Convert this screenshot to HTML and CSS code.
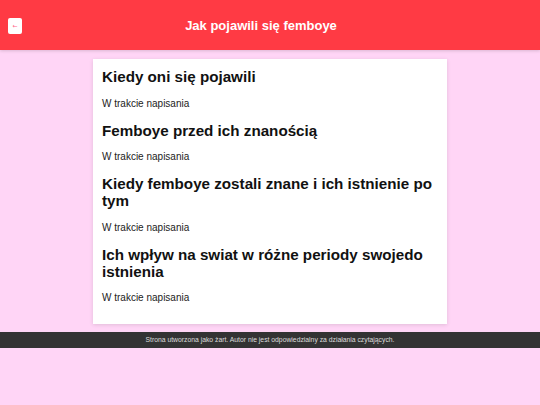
FILE: index.html
```html
<!DOCTYPE html>
<html lang="pl">
<head>
<meta charset="utf-8">
<title>Jak pojawili się femboye</title>
<link rel="stylesheet" href="styles.css">
</head>
<body>
<header class="topbar">
  <button class="back" aria-label="Wróć">←</button>
  <h1 class="title">Jak pojawili się femboye</h1>
</header>
<main class="main">
  <article class="card">
    <h2>Kiedy oni się pojawili</h2>
    <p>W trakcie napisania</p>
    <h2>Femboye przed ich znanością</h2>
    <p>W trakcie napisania</p>
    <h2>Kiedy femboye zostali znane i ich istnienie po tym</h2>
    <p>W trakcie napisania</p>
    <h2>Ich wpływ na swiat w różne periody swojedo istnienia</h2>
    <p>W trakcie napisania</p>
  </article>
</main>
<footer class="footer">Strona utworzona jako żart. Autor nie jest odpowiedzialny za działania czytających.</footer>
</body>
</html>
```
FILE: styles.css
```css
html, body {
  margin: 0;
  padding: 0;
}
body {
  background: #ffd5f6;
  font-family: "Liberation Sans", Arial, sans-serif;
  color: #111;
}
.topbar {
  height: 50px;
  background: #ff3a44;
  display: flex;
  align-items: center;
  padding: 0 8px;
  box-shadow: 0 1px 3px rgba(0,0,0,0.15);
  position: relative;
}
.back {
  width: 14px;
  height: 16px;
  padding: 0;
  border: none;
  border-radius: 2px;
  background: #fff;
  color: #ff6a8a;
  font-size: 6px;
  line-height: 16px;
  font-family: "DejaVu Sans", sans-serif;
  margin-top: 1px;
}
.title {
  flex: 1;
  margin: 0 32px 0 0;
  text-align: center;
  color: #fff;
  font-size: 13px;
  font-weight: bold;
}
.main {
  padding: 9px 0 8px;
}
.card {
  width: 336px;
  margin: 0 auto;
  background: #fff;
  padding: 9px 9px 9px;
  box-shadow: 0 1px 4px rgba(0,0,0,0.12);
}
.card h2 {
  font-size: 15.2px;
  line-height: 17px;
  font-weight: bold;
  margin: 13px 0 12.5px;
  color: #111;
}
.card h2:first-child {
  margin-top: 0;
}
.card p {
  font-size: 10px;
  margin: 10px 0;
  color: #222;
}
.card p:last-child {
  margin-bottom: 12px;
}
.footer {
  background: #333;
  color: #ddd;
  text-align: center;
  font-size: 6.8px;
  height: 16px;
  line-height: 16px;
}
```
